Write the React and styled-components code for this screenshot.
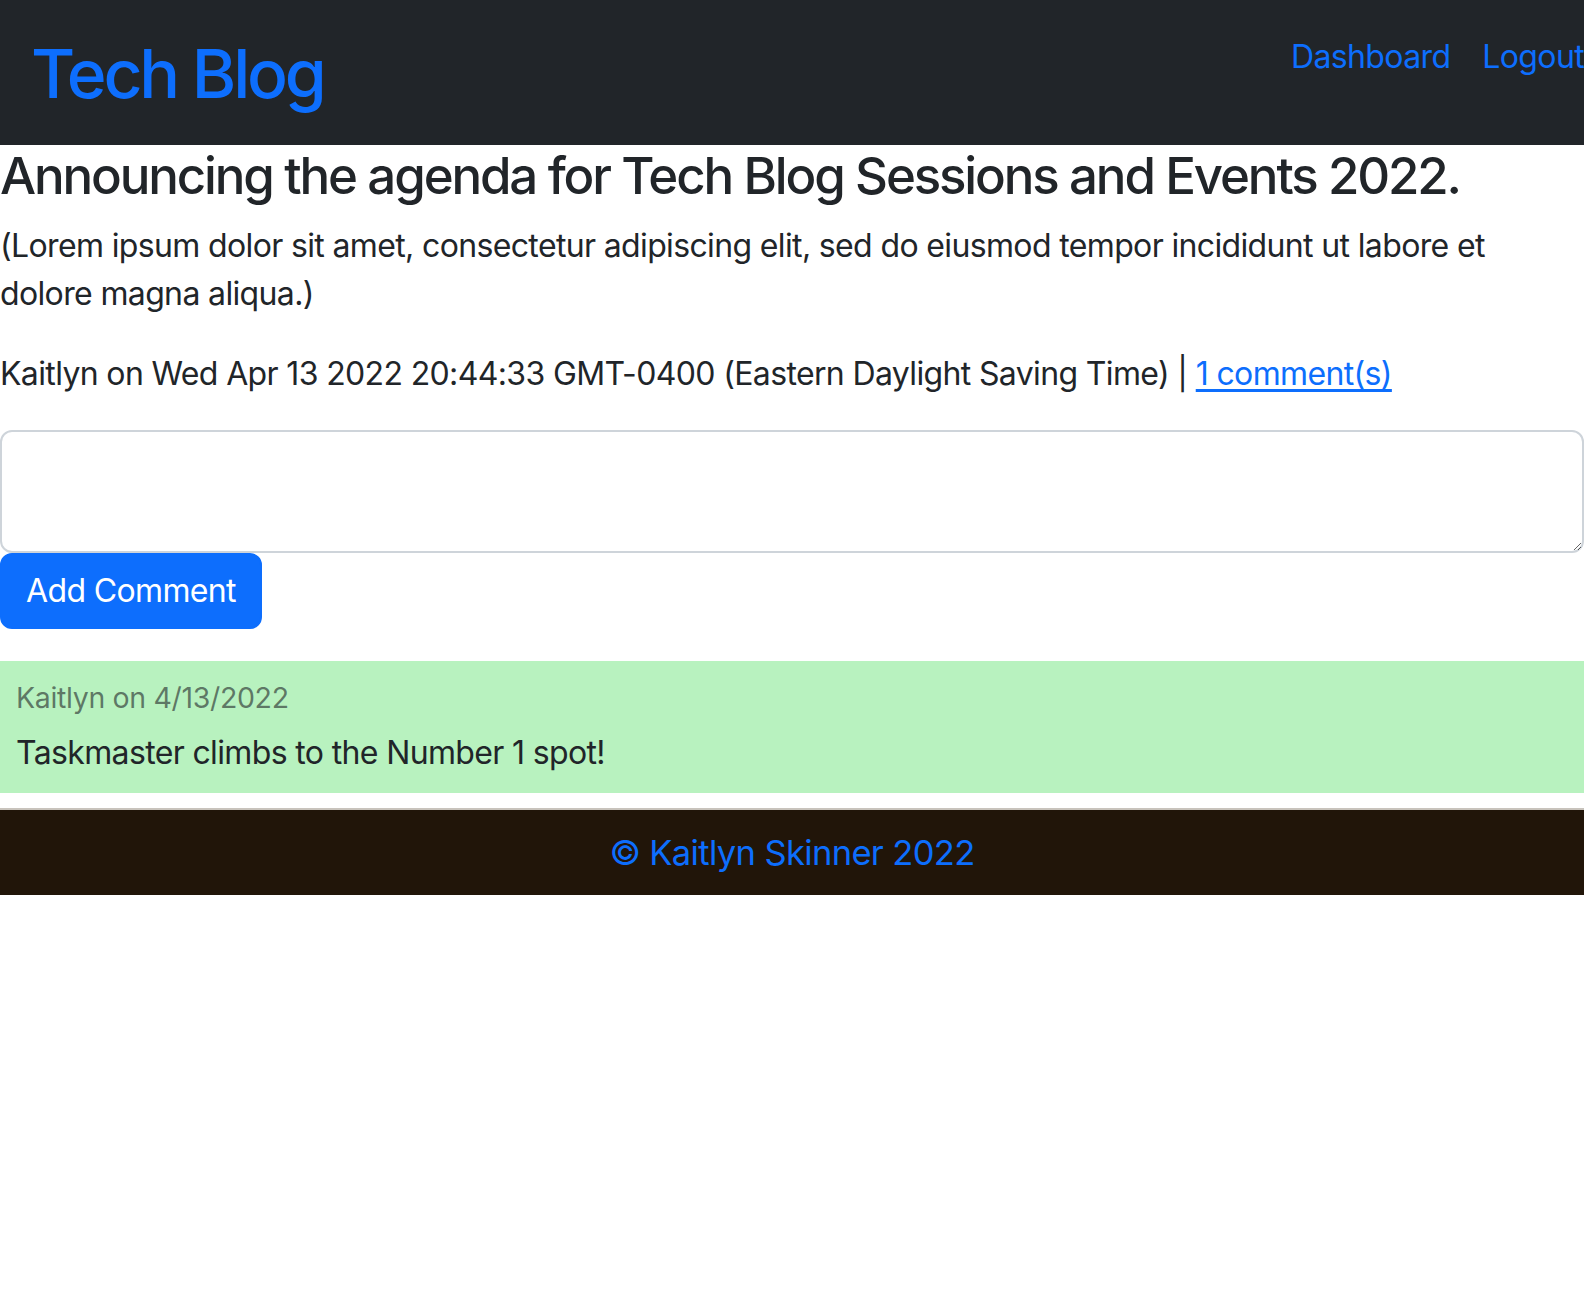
import React, { useState } from 'react'
import styled, { createGlobalStyle } from 'styled-components'

const GlobalStyle = createGlobalStyle`
  body {
    margin: 0;
    background: #fff;
    color: #212529;
    font-family: Inter, "Noto Sans", "Liberation Sans", sans-serif;
    font-size: 32px;
    line-height: 1.5;
    letter-spacing: -0.02em;
  }
  * { box-sizing: border-box; }
`

const Header = styled.header`
  background: #212529;
  height: 145px;
  padding: 33px 0 0 31px;
  display: flex;
  justify-content: space-between;
  align-items: flex-start;
`

const Brand = styled.h1`
  margin: 0;
  font-size: 67.8px;
  font-weight: 500;
  line-height: 1.2;
  letter-spacing: -0.047em;
  color: #0d6efd;
`

const NavList = styled.nav`
  display: flex;
`

const NavLink = styled.a`
  color: #0d6efd;
  text-decoration: none;
  padding: 0 16px;
  line-height: 48px;
  &:last-child { padding-right: 0; }
`

const Main = styled.main`
  display: flex;
  flex-direction: column;
`

const PostTitle = styled.h3`
  margin: 0 0 16px;
  font-size: 51px;
  font-weight: 500;
  line-height: 1.2;
  letter-spacing: -0.042em;
  white-space: nowrap;
`

const Text = styled.p`
  margin: 0 0 32px;
`

const BlueLink = styled.a`
  color: #0d6efd;
  text-decoration: underline;
  text-underline-offset: 4px;
`

const CommentForm = styled.form`
  display: flex;
  flex-direction: column;
  align-items: flex-start;
`

const CommentInput = styled.textarea`
  width: 100%;
  height: 123px;
  margin: 0;
  border: 2px solid #ced4da;
  border-radius: 12px;
  font: inherit;
  padding: 12px 24px;
  display: block;
`

const Button = styled.button`
  background: #0d6efd;
  color: #fff;
  border: 2px solid #0d6efd;
  border-radius: 12px;
  font: inherit;
  letter-spacing: -0.02em;
  line-height: 48px;
  padding: 12px 24px;
  cursor: pointer;
`

const CommentCard = styled.div`
  margin-top: 32px;
  background: #b8f2bf;
  padding: 16px 16px 16px;
`

const CommentMeta = styled.p`
  margin: 0 0 10px;
  font-size: 28.5px;
  line-height: 42px;
  letter-spacing: -0.012em;
  color: rgba(33, 37, 41, 0.6);
`

const CommentBody = styled.p`
  margin: 0;
`

const Footer = styled.footer`
  margin-top: 15px;
  border-top: 2px solid #c8c3bc;
  background: #211509;
  height: 87px;
  display: flex;
  align-items: center;
  justify-content: center;
  color: #0d6efd;
  font-size: 34.5px;
`

const comments = [
  { user: 'Kaitlyn', date: '4/13/2022', text: 'Taskmaster climbs to the Number 1 spot!' }
]

const App = () => {
  const [comment, setComment] = useState('')

  return (
    <React.Fragment>
      <GlobalStyle />
      <Header>
        <Brand>Tech Blog</Brand>
        <NavList>
          <NavLink href="#">Dashboard</NavLink>
          <NavLink href="#">Logout</NavLink>
        </NavList>
      </Header>
      <Main>
        <PostTitle>Announcing the agenda for Tech Blog Sessions and Events 2022.</PostTitle>
        <Text>(Lorem ipsum dolor sit amet, consectetur adipiscing elit, sed do eiusmod tempor incididunt ut labore et dolore magna aliqua.)</Text>
        <Text>
          Kaitlyn on Wed Apr 13 2022 20:44:33 GMT-0400 (Eastern Daylight Saving Time) | <BlueLink href="#">1 comment(s)</BlueLink>
        </Text>
        <CommentForm onSubmit={(e) => e.preventDefault()}>
          <CommentInput value={comment} onChange={(e) => setComment(e.target.value)} />
          <Button type="submit">Add Comment</Button>
        </CommentForm>
        {comments.map((c, i) => (
          <CommentCard key={i}>
            <CommentMeta>{c.user} on {c.date}</CommentMeta>
            <CommentBody>{c.text}</CommentBody>
          </CommentCard>
        ))}
      </Main>
      <Footer>© Kaitlyn Skinner 2022</Footer>
    </React.Fragment>
  )
}

export default App
